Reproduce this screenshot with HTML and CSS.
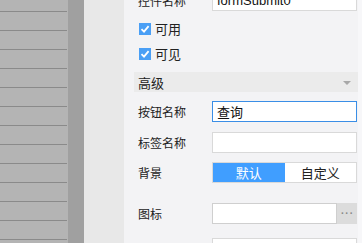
FILE: index.html
```html
<!DOCTYPE html>
<html lang="zh">
<head>
    <meta charset="UTF-8">
    <title>属性面板</title>
    <link rel="stylesheet" href="styles.css">
</head>
<body>
    <div class="list">
        <div class="list-row"></div><div class="list-row"></div><div class="list-row"></div>
        <div class="list-row"></div><div class="list-row"></div><div class="list-row"></div>
        <div class="list-row"></div><div class="list-row"></div><div class="list-row"></div>
        <div class="list-row"></div><div class="list-row"></div><div class="list-row"></div>
        <div class="list-row"></div><div class="list-row"></div>
    </div>
    <div class="scroll-strip"></div>
    <div class="gutter"></div>

    <!-- 属性面板 -->
    <div class="panel">
        <div class="form">
            <div class="row">
                <span class="label">控件名称</span>
                <input class="field" type="text" value="formSubmit0">
            </div>
            <div class="check-row">
                <span class="check"><svg width="12" height="12" viewBox="0 0 12 12"><path d="M2.5 6.2 L5 8.6 L9.6 3.2" fill="none" stroke="#fff" stroke-width="1.8"/></svg></span>
                <span>可用</span>
            </div>
            <div class="check-row">
                <span class="check"><svg width="12" height="12" viewBox="0 0 12 12"><path d="M2.5 6.2 L5 8.6 L9.6 3.2" fill="none" stroke="#fff" stroke-width="1.8"/></svg></span>
                <span>可见</span>
            </div>
            <div class="section">
                <span>高级</span>
                <span class="arrow"></span>
            </div>
            <div class="row row-name">
                <span class="label">按钮名称</span>
                <input class="field active" type="text" value="查询">
            </div>
            <div class="row row-tag">
                <span class="label">标签名称</span>
                <input class="field" type="text" value="">
            </div>
            <div class="row row-bg">
                <span class="label">背景</span>
                <div class="segment">
                    <span class="seg seg-on">默认</span>
                    <span class="seg">自定义</span>
                </div>
            </div>
            <div class="row row-icon">
                <span class="label">图标</span>
                <div class="picker">
                    <input class="field picker-input" type="text" value="">
                    <span class="picker-btn">···</span>
                </div>
            </div>
            <div class="row row-key">
                <span class="label">快捷键</span>
                <input class="field" type="text" value="enter">
            </div>
        </div>
    </div>
    <div class="edge"></div>
</body>
</html>
```

FILE: styles.css
```css
body {
    margin: 0;
    width: 362px;
    height: 243px;
    overflow: hidden;
    display: flex;
    font-family: 'Liberation Sans', 'Noto Sans CJK SC', sans-serif;
    font-size: 12px;
    color: #222;
}
.list {
    width: 68px;
    background-color: #b4b4b4;
    margin-top: -7px;
}
.list-row {
    width: 67px;
    height: 18px;
    border-bottom: 1px solid #8a8a8a;
}
.scroll-strip {
    width: 16px;
    background-color: #a0a0a0;
}
.gutter {
    width: 40px;
    background-color: #e8e8e8;
}
.panel {
    width: 224px;
    padding-left: 10px;
    background-color: #f3f3f5;
}
.edge {
    width: 4px;
    background-color: #f7f7f9;
}
.form {
    margin-top: -10px;
}
.row {
    display: flex;
    align-items: center;
    height: 21px;
    padding-left: 4px;
}
.label {
    width: 74px;
}
.field {
    box-sizing: border-box;
    width: 145px;
    height: 21px;
    margin: 0;
    padding: 0 4px;
    border: 1px solid #d9d9d9;
    background-color: #fff;
    font-family: 'Liberation Sans', 'Noto Sans CJK SC', sans-serif;
    font-size: 13px;
    color: #111;
    outline: none;
}
.field.active {
    border-color: #3a8ee6;
}
.check-row {
    display: flex;
    align-items: center;
    height: 25px;
    padding-left: 5px;
    font-size: 13px;
}
.check-row:nth-child(2) {
    margin-top: 5px;
}
.check {
    width: 12px;
    height: 12px;
    background-color: #4a9ff5;
    margin-right: 4px;
    display: flex;
}
.section {
    display: flex;
    align-items: center;
    justify-content: space-between;
    height: 20px;
    margin-top: 6px;
    padding: 0 7px 0 4px;
    background-color: #ebebeb;
    font-size: 13px;
}
.arrow {
    width: 0;
    height: 0;
    border-left: 4px solid transparent;
    border-right: 4px solid transparent;
    border-top: 4px solid #a8a8a8;
    margin-top: 2px;
}
.row-name {
    margin-top: 9px;
}
.row-tag {
    margin-top: 10px;
}
.row-bg {
    margin-top: 9px;
}
.row-icon {
    margin-top: 20px;
}
.row-key {
    margin-top: 14px;
}
.segment {
    box-sizing: border-box;
    display: flex;
    width: 145px;
    height: 21px;
    border: 1px solid #d9d9d9;
    background-color: #fff;
}
.seg {
    flex: 1;
    display: flex;
    align-items: center;
    justify-content: center;
    font-size: 13px;
}
.seg-on {
    background-color: #409eff;
    color: #fff;
}
.picker {
    display: flex;
    width: 145px;
}
.picker-input {
    width: 125px;
    border-color: #cfcfcf;
}
.picker-btn {
    width: 20px;
    height: 21px;
    background-color: #dcdcdc;
    color: #888;
    display: flex;
    align-items: center;
    justify-content: center;
    font-size: 10px;
    font-weight: bold;
    letter-spacing: 1px;
    padding-left: 1px;
    box-sizing: border-box;
}
```
